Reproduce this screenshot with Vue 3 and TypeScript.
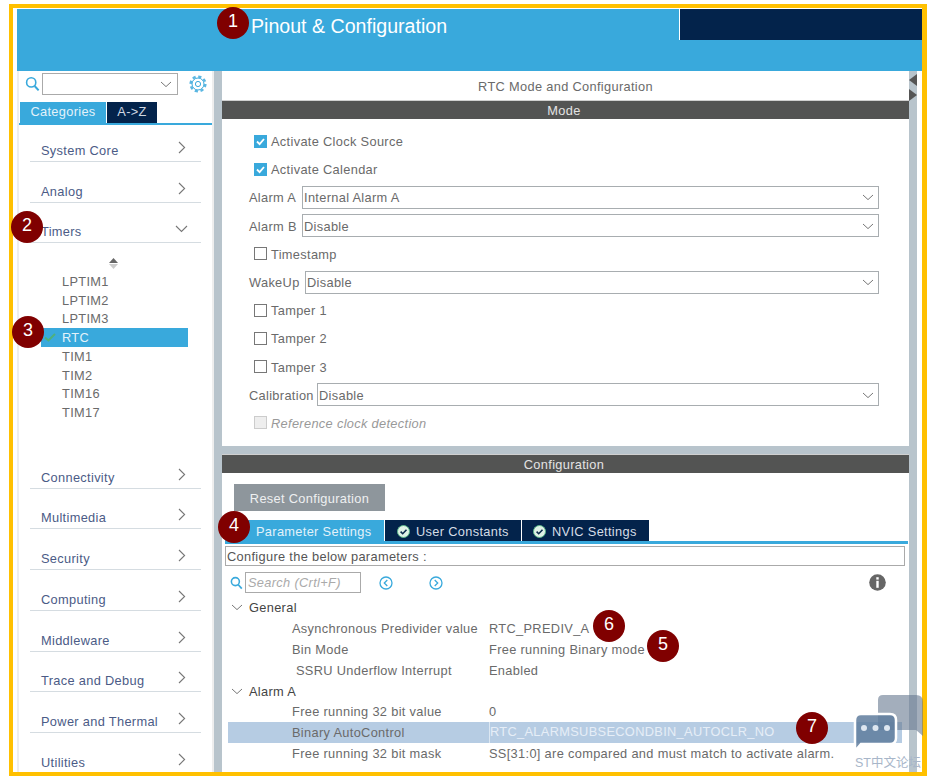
<script setup lang="ts">
interface Category {
  label: string
  open?: boolean
}

interface FormRow {
  kind: 'check' | 'select' | 'disabled'
  label: string
  value?: string
  checked?: boolean
  labelClass?: string
}

interface TreeRow {
  label: string
  value?: string
  group?: boolean
  shift?: boolean
  active?: boolean
}

const topCategories: Category[] = [
  { label: 'System Core' },
  { label: 'Analog' },
  { label: 'Timers', open: true },
]

const bottomCategories: Category[] = [
  { label: 'Connectivity' },
  { label: 'Multimedia' },
  { label: 'Security' },
  { label: 'Computing' },
  { label: 'Middleware' },
  { label: 'Trace and Debug' },
  { label: 'Power and Thermal' },
  { label: 'Utilities' },
]

const timers = ['LPTIM1', 'LPTIM2', 'LPTIM3', 'RTC', 'TIM1', 'TIM2', 'TIM16', 'TIM17']

const formRows: FormRow[] = [
  { kind: 'check', label: 'Activate Clock Source', checked: true },
  { kind: 'check', label: 'Activate Calendar', checked: true },
  { kind: 'select', label: 'Alarm A', value: 'Internal Alarm A', labelClass: 'w-alarm' },
  { kind: 'select', label: 'Alarm B', value: 'Disable', labelClass: 'w-alarm' },
  { kind: 'check', label: 'Timestamp' },
  { kind: 'select', label: 'WakeUp', value: 'Disable', labelClass: 'w-wake' },
  { kind: 'check', label: 'Tamper 1' },
  { kind: 'check', label: 'Tamper 2' },
  { kind: 'check', label: 'Tamper 3' },
  { kind: 'select', label: 'Calibration', value: 'Disable', labelClass: 'w-calib' },
  { kind: 'disabled', label: 'Reference clock detection' },
]

const treeRows: TreeRow[] = [
  { label: 'General', group: true },
  { label: 'Asynchronous Predivider value', value: 'RTC_PREDIV_A' },
  { label: 'Bin Mode', value: 'Free running Binary mode' },
  { label: 'SSRU Underflow Interrupt', value: 'Enabled', shift: true },
  { label: 'Alarm A', group: true },
  { label: 'Free running 32 bit value', value: '0' },
  { label: 'Binary AutoControl', value: 'RTC_ALARMSUBSECONDBIN_AUTOCLR_NO', active: true },
  { label: 'Free running 32 bit mask', value: 'SS[31:0] are compared and must match to activate alarm.' },
]

const badges = [
  { n: 1, x: 233, y: 23 },
  { n: 2, x: 27, y: 227 },
  { n: 3, x: 28, y: 332 },
  { n: 4, x: 234, y: 527 },
  { n: 5, x: 663, y: 646 },
  { n: 6, x: 609, y: 626 },
  { n: 7, x: 812, y: 728 },
]
</script>

<template>
  <div class="page">
    <div class="frame">
      <header class="top">
        <div class="top-row">
          <div class="top-title">Pinout &amp; Configuration</div>
          <div class="top-dark"></div>
        </div>
      </header>

      <div class="body">
        <aside class="side">
          <div class="side-search">
            <svg class="search-icon" width="15" height="16" viewBox="0 0 15 16">
              <circle cx="6.2" cy="6.4" r="4.6" fill="none" stroke="#39a9dc" stroke-width="1.6" />
              <path d="M9.6 10l4 4.4" stroke="#39a9dc" stroke-width="2" />
            </svg>
            <div class="side-combo">
              <svg width="12" height="7" viewBox="0 0 12 7">
                <path d="M1 1l5 4.6L11 1" fill="none" stroke="#777" stroke-width="1" />
              </svg>
            </div>
            <svg class="gear" width="18" height="18" viewBox="0 0 18 18">
              <circle cx="9" cy="9" r="7.4" fill="none" stroke="#5bb7e2" stroke-width="2.4" stroke-dasharray="3.2 2.61" />
              <circle cx="9" cy="9" r="6" fill="#fff" stroke="#39a9dc" stroke-width="1" />
              <circle cx="9" cy="9" r="2.6" fill="none" stroke="#39a9dc" stroke-width="1" />
            </svg>
          </div>
          <div class="side-tabs">
            <div class="side-tab on">Categories</div>
            <div class="side-tab">A-&gt;Z</div>
          </div>
          <div class="cats">
            <div v-for="c in topCategories" :key="c.label" class="cat">
              <span class="cat-name">{{ c.label }}</span>
              <svg v-if="c.open" class="cat-down" width="13" height="8" viewBox="0 0 13 8">
                <path d="M1 1l5.500 5.400L12 1" fill="none" stroke="#777" stroke-width="1.1" />
              </svg>
              <svg v-else class="cat-right" width="8" height="13" viewBox="0 0 8 13">
                <path d="M1 1l5.600 5.500L1 12" fill="none" stroke="#777" stroke-width="1.1" />
              </svg>
            </div>
            <div class="timers">
              <svg class="scroll-mark" width="9" height="11" viewBox="0 0 9 11">
                <path d="M4.500 0L9 5H0z" fill="#666" />
                <path d="M0 6h9l-4.500 5z" fill="#ccc" />
              </svg>
              <div
                v-for="t in timers"
                :key="t"
                :class="['timer', { on: t === 'RTC' }]"
              >
                <svg v-if="t === 'RTC'" class="timer-check" width="12" height="9" viewBox="0 0 12 9">
                  <path d="M1 4.500l3.400 3L11 1" fill="none" stroke="#4fb07c" stroke-width="2" />
                </svg>
                {{ t }}
              </div>
            </div>
            <div v-for="c in bottomCategories" :key="c.label" class="cat">
              <span class="cat-name">{{ c.label }}</span>
              <svg class="cat-right" width="8" height="13" viewBox="0 0 8 13">
                <path d="M1 1l5.600 5.500L1 12" fill="none" stroke="#777" stroke-width="1.1" />
              </svg>
            </div>
          </div>
        </aside>

        <main class="main">
          <section class="mode">
            <div class="panel-title">RTC Mode and Configuration</div>
            <div class="bar">Mode</div>
            <div class="form">
              <div v-for="r in formRows" :key="r.label" class="form-row">
                <template v-if="r.kind === 'select'">
                  <span :class="['form-label', r.labelClass]">{{ r.label }}</span>
                  <div class="select">
                    <span>{{ r.value }}</span>
                    <svg width="12" height="7" viewBox="0 0 12 7">
                      <path d="M1 1l5 4.600L11 1" fill="none" stroke="#777" stroke-width="1" />
                    </svg>
                  </div>
                </template>
                <template v-else>
                  <span :class="['box', { checked: r.checked, off: r.kind === 'disabled' }]">
                    <svg v-if="r.checked" width="13" height="13" viewBox="0 0 13 13">
                      <path d="M3 6.500l2.600 2.600L10 4" fill="none" stroke="#fff" stroke-width="1.800" />
                    </svg>
                  </span>
                  <span :class="['check-label', { 'check-off': r.kind === 'disabled' }]">{{ r.label }}</span>
                </template>
              </div>
            </div>
          </section>

          <section class="config">
            <div class="bar">Configuration</div>
            <button class="reset">Reset Configuration</button>
            <div class="tabs">
              <div class="tab on">Parameter Settings</div>
              <div class="tab user">
                <svg width="13" height="13" viewBox="0 0 13 13">
                  <circle cx="6.500" cy="6.500" r="6" fill="#dff2e6" stroke="#5cb98a" />
                  <path d="M3.600 6.600l2.100 2.100 3.800-4" fill="none" stroke="#0b2b4d" stroke-width="1.600" />
                </svg>
                User Constants
              </div>
              <div class="tab nvic">
                <svg width="13" height="13" viewBox="0 0 13 13">
                  <circle cx="6.500" cy="6.500" r="6" fill="#dff2e6" stroke="#5cb98a" />
                  <path d="M3.600 6.600l2.100 2.100 3.800-4" fill="none" stroke="#0b2b4d" stroke-width="1.600" />
                </svg>
                NVIC Settings
              </div>
            </div>
            <div class="hint">Configure the below parameters :</div>
            <div class="tools">
              <svg width="13" height="14" viewBox="0 0 15 16">
                <circle cx="6.200" cy="6.400" r="4.600" fill="none" stroke="#39a9dc" stroke-width="1.800" />
                <path d="M9.600 10l4 4.400" stroke="#39a9dc" stroke-width="2" />
              </svg>
              <div class="tools-search">Search (Crtl+F)</div>
              <svg class="nav-prev" width="14" height="14" viewBox="0 0 14 14">
                <circle cx="7" cy="7" r="6" fill="none" stroke="#39a9dc" stroke-width="1.300" />
                <path d="M8.300 4L5.300 7l3 3" fill="none" stroke="#39a9dc" stroke-width="1.300" />
              </svg>
              <svg class="nav-next" width="14" height="14" viewBox="0 0 14 14">
                <circle cx="7" cy="7" r="6" fill="none" stroke="#39a9dc" stroke-width="1.300" />
                <path d="M5.700 4l3 3-3 3" fill="none" stroke="#39a9dc" stroke-width="1.300" />
              </svg>
              <svg class="info" width="17" height="17" viewBox="0 0 17 17">
                <circle cx="8.500" cy="8.500" r="8.300" fill="#666" />
                <rect x="7.300" y="3.200" width="2.400" height="2.400" fill="#fff" />
                <rect x="7.300" y="6.800" width="2.400" height="7" fill="#fff" />
              </svg>
            </div>
            <div class="tree">
              <div
                v-for="r in treeRows"
                :key="r.label + r.value"
                :class="['tree-row', { group: r.group, active: r.active }]"
              >
                <template v-if="r.group">
                  <svg width="12" height="7" viewBox="0 0 12 7">
                    <path d="M1 1l5 4.600L11 1" fill="none" stroke="#777" stroke-width="1" />
                  </svg>
                  <span>{{ r.label }}</span>
                </template>
                <template v-else>
                  <span :class="['tree-label', { shift: r.shift }]">{{ r.label }}</span>
                  <span class="tree-value">{{ r.value }}</span>
                </template>
              </div>
            </div>
          </section>
        </main>

        <div class="rail">
          <span class="arrow-left"></span>
          <span class="arrow-right"></span>
        </div>
        <div class="edge"></div>
      </div>
    </div>

    <div
      v-for="b in badges"
      :key="b.n"
      class="badge"
      :style="{ left: b.x - 16 + 'px', top: b.y - 16 + 'px' }"
    >
      {{ b.n }}
    </div>

    <div class="mark">
      <svg width="74" height="58" viewBox="0 0 74 58">
        <path d="M25 5q0-5 5-5h33q7 0 7 7v34l-7-6H25z" fill="#66788f" fill-opacity=".6" />
        <path d="M2 25q0-6 6-6h29q6 0 6 6v18q0 6-6 6H8l-6 7z" fill="#5f7c9e" fill-opacity=".85" stroke="#fff" stroke-width="2.500" />
        <circle cx="11" cy="33" r="3" fill="#dde6f0" />
        <circle cx="22.500" cy="33" r="3" fill="#dde6f0" />
        <circle cx="34" cy="33" r="3" fill="#dde6f0" />
      </svg>
      <div class="mark-text">ST中文论坛</div>
    </div>
  </div>
</template>

<style scoped>
.page {
  position: relative;
  width: 932px;
  height: 778px;
  overflow: hidden;
  background: #fff;
  font-family: "Liberation Sans", Arimo, sans-serif;
  font-size: 12.800px;
  letter-spacing: 0.33px;
  color: #6a6a6a;
}

.frame {
  display: flex;
  flex-direction: column;
  box-sizing: border-box;
  width: 918px;
  height: 771.500px;
  margin: 4px 0 0 9px;
  padding: 1px 0 0 4px;
  border-style: solid;
  border-color: #ffc000;
  border-width: 4px 5px 4.500px 4px;
  overflow: hidden;
}

.top {
  flex: 0 0 62px;
  background: #39a9dc;
}

.top-row {
  display: flex;
  height: 31px;
}

.top-title {
  flex: 1;
  padding: 6px 0 0 234px;
  color: #fff;
  font-size: 19.600px;
  letter-spacing: 0;
}

.top-dark {
  flex: 0 0 242px;
  border-left: 1px solid #fff;
  background: #03234b;
}

.body {
  display: flex;
  flex: 1;
  min-height: 0;
  background: #b8c4cc;
}

.side {
  flex: 0 0 197px;
  box-sizing: border-box;
  border-left: 2px solid #eee;
  border-right: 2px solid #eee;
  background: #fff;
  overflow: hidden;
}

.side-search {
  display: flex;
  align-items: center;
  height: 26px;
  padding: 0 0 0 6px;
}

.search-icon {
  margin-top: -1px;
}

.side-combo {
  display: flex;
  align-items: center;
  justify-content: flex-end;
  box-sizing: border-box;
  width: 136px;
  height: 22px;
  margin-left: 2px;
  padding-right: 5px;
  border: 1px solid #aaa;
}

.gear {
  margin-left: 11px;
}

.side-tabs {
  display: flex;
  gap: 1px;
  height: 21px;
  padding-left: 1px;
  margin-top: 5px;
  border-bottom: 2px solid #39a9dc;
}

.side-tab {
  width: 50px;
  line-height: 19px;
  text-align: center;
  background: #03234b;
  color: #cfd8e2;
}

.side-tab.on {
  width: 86px;
  background: #39a9dc;
  color: #e3f2fa;
}

.cats {
  display: flex;
  flex-direction: column;
  gap: 3.700px;
  padding: 0 11px;
}

.cat {
  display: flex;
  flex: 0 0 37px;
  align-items: flex-end;
  justify-content: space-between;
  box-sizing: border-box;
  padding: 0 15px 3px 11px;
  border-bottom: 1.500px solid #d5dce1;
  color: #4b5b86;
}

.cat-right {
  margin-bottom: 4px;
}

.cat-down {
  margin: 0 -2px 6px 0;
}

.timers {
  flex: 0 0 201px;
}

.scroll-mark {
  display: block;
  margin: 11px 0 0 79px;
}

.timer {
  position: relative;
  height: 18.700px;
  margin: 0 13px 0 11px;
  padding-left: 21px;
  line-height: 20px;
}

.scroll-mark + .timer {
  margin-top: 3px;
}

.timer.on {
  background: #39a9dc;
  color: #e3f2fa;
}

.timer-check {
  position: absolute;
  left: 3px;
  top: 5px;
}

.main {
  display: flex;
  flex-direction: column;
  gap: 8.500px;
  flex: 0 0 687px;
  margin-left: 8px;
  min-width: 0;
}

.mode {
  flex: 0 0 374.500px;
  background: #fff;
}

.panel-title {
  height: 29px;
  line-height: 31px;
  text-align: center;
}

.bar {
  height: 19px;
  padding-right: 3px;
  border-top: 1px solid #d0d0d0;
  box-sizing: border-box;
  line-height: 19px;
  text-align: center;
  background: #535453;
  color: #e3e3e3;
}

.form {
  padding: 8px 30px 0 27px;
}

.form-row {
  display: flex;
  align-items: center;
  height: 28.200px;
}

.form-label {
  flex: none;
  padding-top: 1px;
}

.w-alarm {
  width: 53px;
}

.w-wake {
  width: 56px;
}

.w-calib {
  width: 68px;
}

.select {
  display: flex;
  flex: 1;
  align-items: center;
  justify-content: space-between;
  box-sizing: border-box;
  height: 23px;
  padding: 1px 4px 0 1px;
  border: 1px solid #a8adb0;
}

.box {
  display: flex;
  flex: none;
  box-sizing: border-box;
  width: 13px;
  height: 13px;
  margin-left: 5px;
  border: 1px solid #777;
}

.box.checked {
  border: none;
  background: #39a9dc;
}

.box.off {
  border-color: #ccc;
  background: #eee;
}

.check-label {
  margin-left: 4px;
  padding-top: 1px;
}

.check-off {
  color: #999;
  font-style: italic;
}

.config {
  flex: 1;
  min-height: 0;
  overflow: hidden;
  background: #fff;
}

.reset {
  display: block;
  width: 151px;
  height: 27px;
  margin: 11px 0 0 12px;
  padding: 1px 0 0;
  border: none;
  background: #8e969c;
  color: #eef0f1;
  font: inherit;
  letter-spacing: inherit;
}

.tabs {
  display: flex;
  gap: 1px;
  height: 24px;
  margin: 9px 1px 0 3px;
  box-sizing: border-box;
  border-bottom: 3px solid #39a9dc;
}

.tab {
  display: flex;
  align-items: center;
  gap: 6px;
  height: 21px;
  background: #03234b;
  color: #d5dde6;
}

.tab.on {
  width: 159px;
  padding: 1px 0 0 31px;
  box-sizing: border-box;
  background: #39a9dc;
  color: #e3f2fa;
}

.tab.user {
  width: 136px;
  padding: 1px 0 0 12px;
  box-sizing: border-box;
}

.tab.nvic {
  width: 127px;
  padding: 1px 0 0 11px;
  box-sizing: border-box;
}

.hint {
  box-sizing: border-box;
  height: 20px;
  margin: 2px 4px 0 3px;
  padding-left: 1px;
  border: 1px solid #aaa;
  line-height: 19px;
  color: #555;
}

.tools {
  display: flex;
  align-items: center;
  height: 21px;
  margin-top: 6px;
  padding-left: 8px;
}

.tools-search {
  box-sizing: border-box;
  width: 116px;
  height: 21px;
  margin-left: 2px;
  padding-left: 2px;
  border: 1px solid #aaa;
  line-height: 19px;
  font-style: italic;
  color: #aaa;
}

.nav-prev {
  margin-left: 18px;
}

.nav-next {
  margin-left: 36px;
}

.info {
  margin-left: 426px;
}

.tree {
  margin: 4.500px 0 0 6px;
}

.tree-row {
  display: flex;
  align-items: center;
  height: 20.800px;
  white-space: nowrap;
}

.tree-row.group {
  gap: 6px;
  padding-left: 3px;
  color: #444;
}

.tree-label {
  flex: 0 0 261px;
  box-sizing: border-box;
  padding-left: 64px;
}

.tree-label.shift {
  padding-left: 68px;
}

.tree-row.active {
  margin-right: 7px;
  background: #b6cce3;
}

.tree-row.active .tree-value {
  align-self: stretch;
  line-height: 20.800px;
  border-left: 1px solid #dce7f2;
  color: #e6eef7;
}

.rail {
  position: relative;
  flex: 0 0 8px;
}

.arrow-left,
.arrow-right {
  position: absolute;
  left: 0;
  width: 0;
  height: 0;
  border-style: solid;
}

.arrow-left {
  top: 3px;
  border-width: 6px 8px 6px 0;
  border-color: transparent #555 transparent transparent;
}

.arrow-right {
  top: 18px;
  border-width: 6px 0 6px 8px;
  border-color: transparent transparent transparent #555;
}

.edge {
  flex: 1;
  background: #fff;
}

.badge {
  position: absolute;
  display: flex;
  align-items: center;
  justify-content: center;
  box-sizing: border-box;
  width: 32px;
  height: 32px;
  border-radius: 50%;
  background: #800000;
  color: #fff;
  font-size: 18px;
  letter-spacing: 0;
  padding-bottom: 4px;
}

.mark {
  position: absolute;
  left: 853px;
  top: 695px;
  width: 76px;
}

.mark svg {
  display: block;
}

.mark-text {
  margin: 3px 0 0 2px;
  color: #a8b6c9;
  font-family: "Liberation Sans", "Noto Sans CJK SC", sans-serif;
  font-size: 12.500px;
  line-height: 15px;
  letter-spacing: 0;
  white-space: nowrap;
}
</style>
